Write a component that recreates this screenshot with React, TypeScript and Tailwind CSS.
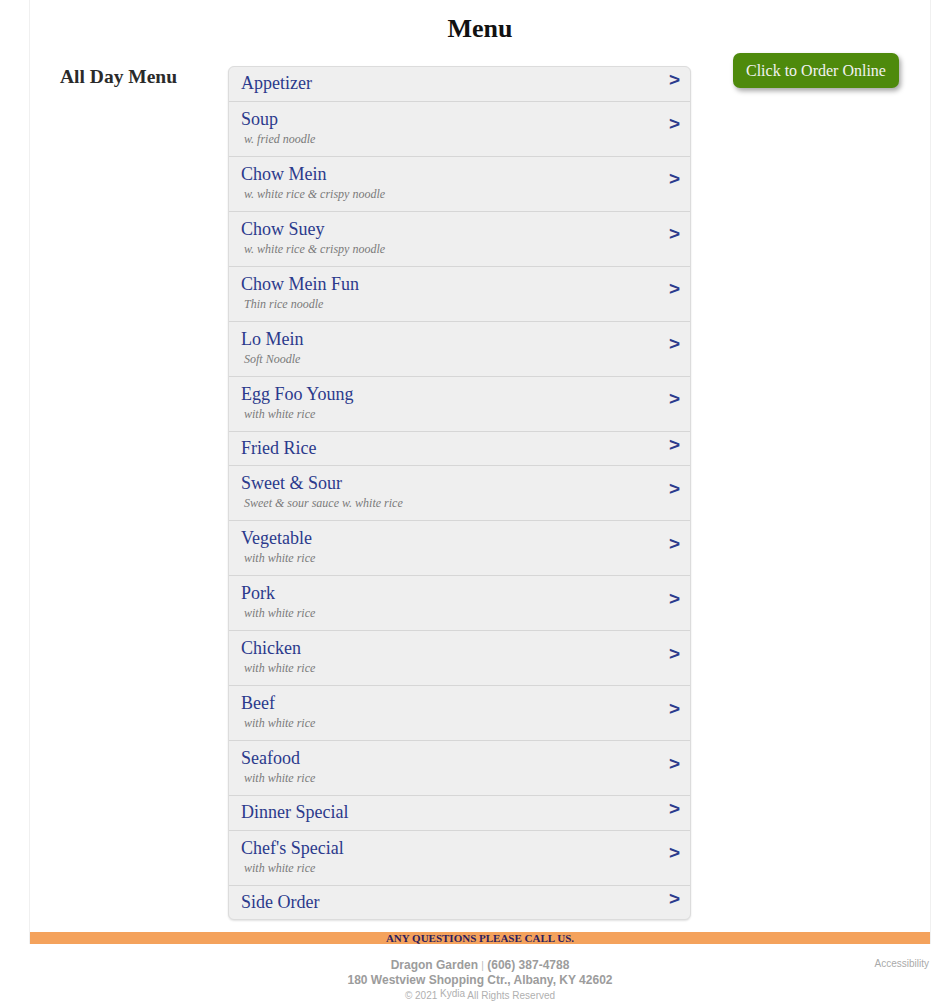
import React from "react";

type Item = { name: string; note?: string };

const items: Item[] = [
  { name: "Appetizer" },
  { name: "Soup", note: "w. fried noodle" },
  { name: "Chow Mein", note: "w. white rice & crispy noodle" },
  { name: "Chow Suey", note: "w. white rice & crispy noodle" },
  { name: "Chow Mein Fun", note: "Thin rice noodle" },
  { name: "Lo Mein", note: "Soft Noodle" },
  { name: "Egg Foo Young", note: "with white rice" },
  { name: "Fried Rice" },
  { name: "Sweet & Sour", note: "Sweet & sour sauce w. white rice" },
  { name: "Vegetable", note: "with white rice" },
  { name: "Pork", note: "with white rice" },
  { name: "Chicken", note: "with white rice" },
  { name: "Beef", note: "with white rice" },
  { name: "Seafood", note: "with white rice" },
  { name: "Dinner Special" },
  { name: "Chef's Special", note: "with white rice" },
  { name: "Side Order" },
];

const MenuRow = ({ item, first }: { item: Item; first: boolean }) => {
  return (
    <div
      className={`flex items-center justify-between pl-[12px] pr-[10px] ${
        item.note ? "pt-[7px] pb-[10px]" : "pt-[6px] pb-[7.5px]"
      } ${first ? "" : "border-t border-[#d6d6d6]"}`}
    >
      <div>
        <div className="text-[18px] leading-[20px] text-[#2b3a8c]">{item.name}</div>
        {item.note && (
          <div className="mt-[3px] pl-[3px] text-[12px] leading-[14px] italic text-[#7a7a7a]">
            {item.note}
          </div>
        )}
      </div>
      <span className="mb-[6px] font-['Liberation_Sans',Arial,sans-serif] text-[19px] font-bold leading-[14px] text-[#2b3a8c]">
        &gt;
      </span>
    </div>
  );
};

export default function App() {
  return (
    <div className="min-h-[1007px] bg-white font-['Liberation_Serif','Times_New_Roman',serif]">
      <div className="ml-[29px] w-[902px] border-x border-[#f0f0f0]">
        <h1 className="pt-[14px] text-center text-[26px] font-bold leading-[30px] text-[#111]">
          Menu
        </h1>
        <div className="mt-[22px] flex">
          <div className="w-[198px] pl-[30px] pt-[1px]">
            <h2 className="text-[19.5px] font-bold leading-[20px] text-[#2a2a2a]">All Day Menu</h2>
          </div>
          <div className="w-[463px] overflow-hidden rounded-[6px] border border-[#dcdcdc] bg-[#efefef] shadow-[0_1px_2px_rgba(0,0,0,0.12)]">
            {items.map((item, i) => (
              <MenuRow key={item.name} item={item} first={i === 0} />
            ))}
          </div>
          <div className="ml-[42px] -mt-[13px]">
            <button className="h-[35px] rounded-[7px] bg-[#4e8a0c] px-[13px] text-[16px] leading-[35px] text-[#f2f2f2] shadow-[2px_3px_5px_rgba(0,0,0,0.35)]">
              Click to Order Online
            </button>
          </div>
        </div>
        <div className="mt-[12px] bg-[#f4a25c] text-center text-[11px] font-bold leading-[12px] text-[#2d1d5c]">
          ANY QUESTIONS PLEASE CALL US.
        </div>
      </div>
      <div className="relative ml-[29px] w-[902px] pt-[14px] text-center font-['Liberation_Sans',Arial,sans-serif]">
        <div className="absolute right-[2px] top-[12px] text-[10px] text-[#aaa]">Accessibility</div>
        <div className="text-[12px] font-bold leading-[14px] text-[#9c9c9c]">
          Dragon Garden <span className="text-[10px] font-normal text-[#bbb]">|</span> (606) 387-4788
        </div>
        <div className="text-[12px] font-bold leading-[14px] text-[#9c9c9c]">
          180 Westview Shopping Ctr., Albany, KY 42602
        </div>
        <div className="mt-[2px] text-[10px] leading-[14px] text-[#b0b0b0]">
          © 2021 <span className="relative -top-[2px]">Kydia</span> All Rights Reserved
        </div>
      </div>
    </div>
  );
}
